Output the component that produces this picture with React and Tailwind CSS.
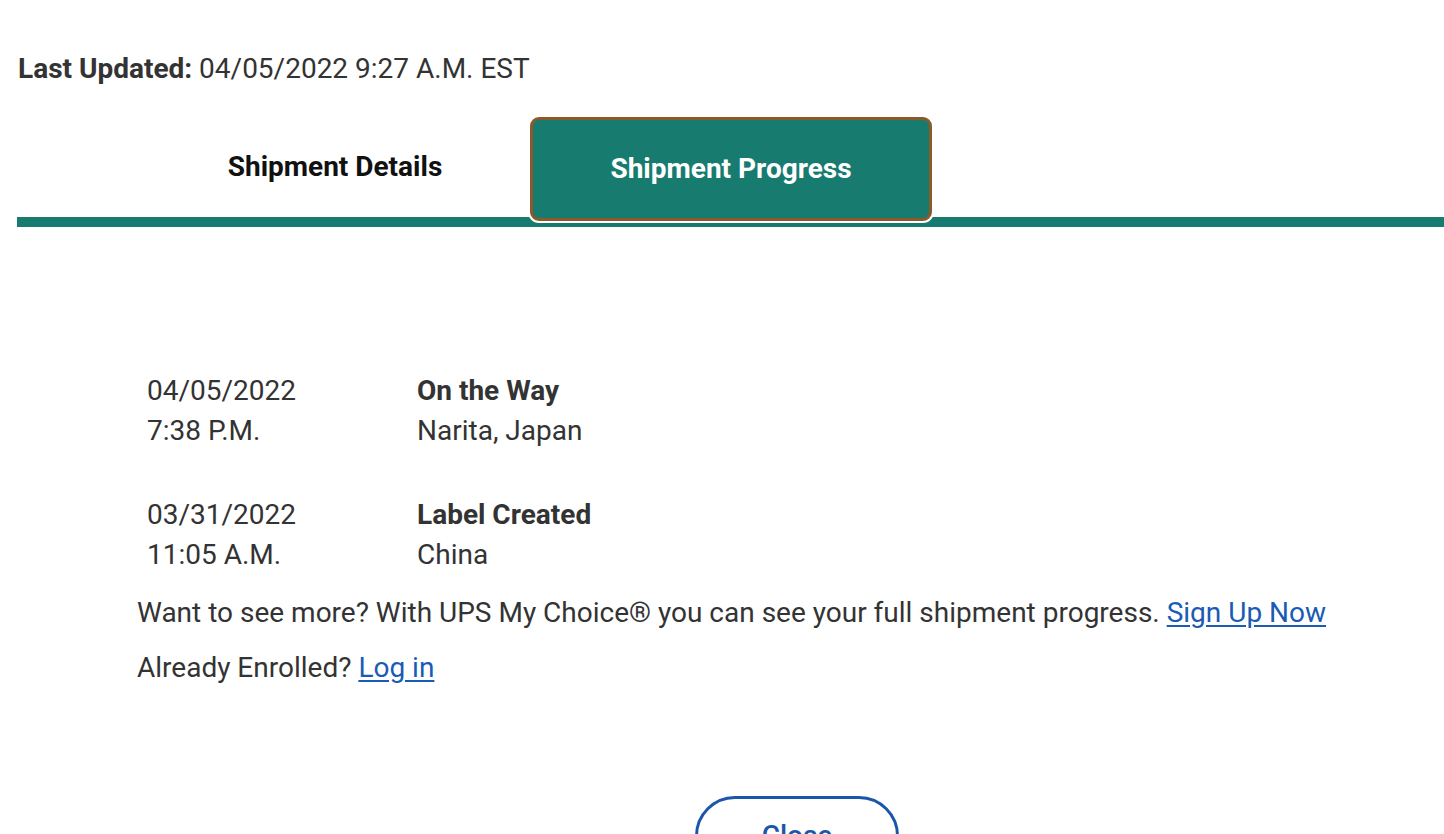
import React from "react";

const events = [
  { date: "04/05/2022", time: "7:38 P.M.", status: "On the Way", place: "Narita, Japan" },
  { date: "03/31/2022", time: "11:05 A.M.", status: "Label Created", place: "China" },
];

export default function App() {
  return (
    <div className="min-h-screen bg-white text-[#333333] text-[28px] leading-[40px] font-['Roboto',sans-serif]">
      {/* last updated */}
      <p className="pt-[49px] pl-[18px]">
        <span className="font-bold">Last Updated:</span> 04/05/2022 9:27 A.M. EST
      </p>

      {/* tabs */}
      <div className="ml-[17px] mt-[28px]">
        <div className="flex items-start h-[100px]">
          <button className="ml-[123px] w-[390px] h-[100px] flex items-center justify-center font-bold text-[#111111]">
            Shipment Details
          </button>
          <button className="relative z-10 w-[402px] h-[104px] flex items-center justify-center rounded-[9px] border-[3px] border-[#8b5a2b] ring-2 ring-white bg-[#177b6f] font-bold text-white">
            Shipment Progress
          </button>
        </div>
        <div className="h-[10px] bg-[#177b6f]"></div>
      </div>

      {/* progress rows */}
      <div className="ml-[147px] mt-[144px] flex flex-col gap-[44px]">
        {events.map((e) => (
          <div key={e.date} className="flex">
            <div className="w-[270px]">
              <div>{e.date}</div>
              <div>{e.time}</div>
            </div>
            <div>
              <div className="font-bold">{e.status}</div>
              <div>{e.place}</div>
            </div>
          </div>
        ))}
      </div>

      <p className="ml-[137px] mt-[18px]">
        Want to see more? With UPS My Choice® you can see your full shipment progress.{" "}
        <a href="#" className="text-[#1a5bb4] underline underline-offset-[3px]">
          Sign Up Now
        </a>
      </p>
      <p className="ml-[137px] mt-[15px]">
        Already Enrolled?{" "}
        <a href="#" className="text-[#1a5bb4] underline underline-offset-[3px]">
          Log in
        </a>
      </p>

      <div className="pb-10">
        <button className="ml-[695px] mt-[108px] w-[204px] h-[80px] rounded-full border-[3px] border-[#1a56aa] text-[#1a56aa] font-medium">
          Close
        </button>
      </div>
    </div>
  );
}
